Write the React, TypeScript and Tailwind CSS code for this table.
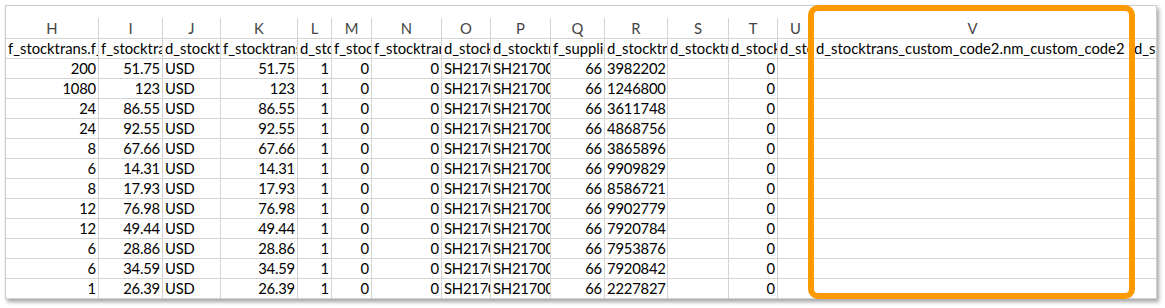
import React from 'react';

type Align = 'left' | 'right';

interface Column {
  letter: string;
  width: string;
  field: string;
  align: Align;
  values: string[];
}

const qty = ['200', '1080', '24', '24', '8', '6', '8', '12', '12', '6', '6', '1'];
const prices = ['51.75', '123', '86.55', '92.55', '67.66', '14.31', '17.93', '76.98', '49.44', '28.86', '34.59', '26.39'];
const batches = ['3982202', '1246800', '3611748', '4868756', '3865896', '9909829', '8586721', '9902779', '7920784', '7953876', '7920842', '2227827'];
const fill = (v: string) => Array(12).fill(v) as string[];

const columns: Column[] = [
  { letter: 'H', width: 'w-[93px]', field: 'f_stocktrans.f_quantity', align: 'right', values: qty },
  { letter: 'I', width: 'w-[64px]', field: 'f_stocktrans.f_unit_price', align: 'right', values: prices },
  { letter: 'J', width: 'w-[58px]', field: 'd_stocktrans.d_currency', align: 'left', values: fill('USD') },
  { letter: 'K', width: 'w-[77px]', field: 'f_stocktrans.f_amount', align: 'right', values: prices },
  { letter: 'L', width: 'w-[34px]', field: 'd_stocktrans.d_rate', align: 'right', values: fill('1') },
  { letter: 'M', width: 'w-[40px]', field: 'f_stocktrans.f_discount', align: 'right', values: fill('0') },
  { letter: 'N', width: 'w-[70px]', field: 'f_stocktrans.f_tax', align: 'right', values: fill('0') },
  { letter: 'O', width: 'w-[49px]', field: 'd_stocktrans.d_order', align: 'left', values: fill('SH21700') },
  { letter: 'P', width: 'w-[60px]', field: 'd_stocktrans.d_ref', align: 'left', values: fill('SH21700') },
  { letter: 'Q', width: 'w-[54px]', field: 'f_supplier_id', align: 'right', values: fill('66') },
  { letter: 'R', width: 'w-[63px]', field: 'd_stocktrans.d_batch', align: 'left', values: batches },
  { letter: 'S', width: 'w-[61px]', field: 'd_stocktrans.d_note', align: 'left', values: fill('') },
  { letter: 'T', width: 'w-[49px]', field: 'd_stocktrans.d_flag', align: 'right', values: fill('0') },
  { letter: 'U', width: 'w-[36px]', field: 'd_stocktrans_custom_code1', align: 'left', values: fill('') },
  { letter: 'V', width: 'w-[318px]', field: 'd_stocktrans_custom_code2.nm_custom_code2', align: 'left', values: fill('') },
  { letter: 'W', width: 'w-[140px]', field: 'd_stocktrans_custom_code3', align: 'left', values: fill('') },
];

const cellBase = 'shrink-0 h-full flex items-center overflow-hidden whitespace-nowrap px-[2px] border-r border-[#d4d4d4]';

const App: React.FC = () => {
  return (
    <div className="relative w-[1165px] h-[308px] bg-white pl-[5px] pt-[5px] font-['Lato',_'Liberation_Sans',_sans-serif] text-[14.8px] text-black">
      <div className="w-[1152px] h-[294px] border-t border-l border-r border-[#cccccc] overflow-hidden bg-white shadow-[2px_3px_4px_rgba(0,0,0,0.35)]">
        <div className="h-[12px]" />

        {/* column letters */}
        <div className="flex h-[21px] border-b border-[#d4d4d4]">
          {columns.map(col => (
            <div key={col.letter} className={`${cellBase} ${col.width} justify-center pt-[1px] text-[#444444]`}>
              {col.letter}
            </div>
          ))}
        </div>

        {/* field names */}
        <div className="flex h-[20px] border-b border-[#d4d4d4]">
          {columns.map(col => (
            <div key={col.letter} className={`${cellBase} ${col.width}`}>
              {col.field}
            </div>
          ))}
        </div>

        {qty.map((_, row) => (
          <div key={row} className="flex h-[20px] border-b border-[#d4d4d4] tracking-[-0.2px]">
            {columns.map(col => (
              <div
                key={col.letter}
                className={`${cellBase} ${col.width} ${col.align === 'right' ? 'justify-end' : 'justify-start'}`}
              >
                {col.values[row]}
              </div>
            ))}
          </div>
        ))}
      </div>

      {/* highlight around column V */}
      <div className="absolute left-[808px] top-[5px] w-[327px] h-[294px] border-[6px] border-[#ff9900] rounded-[10px] pointer-events-none" />
    </div>
  );
};

export default App;
